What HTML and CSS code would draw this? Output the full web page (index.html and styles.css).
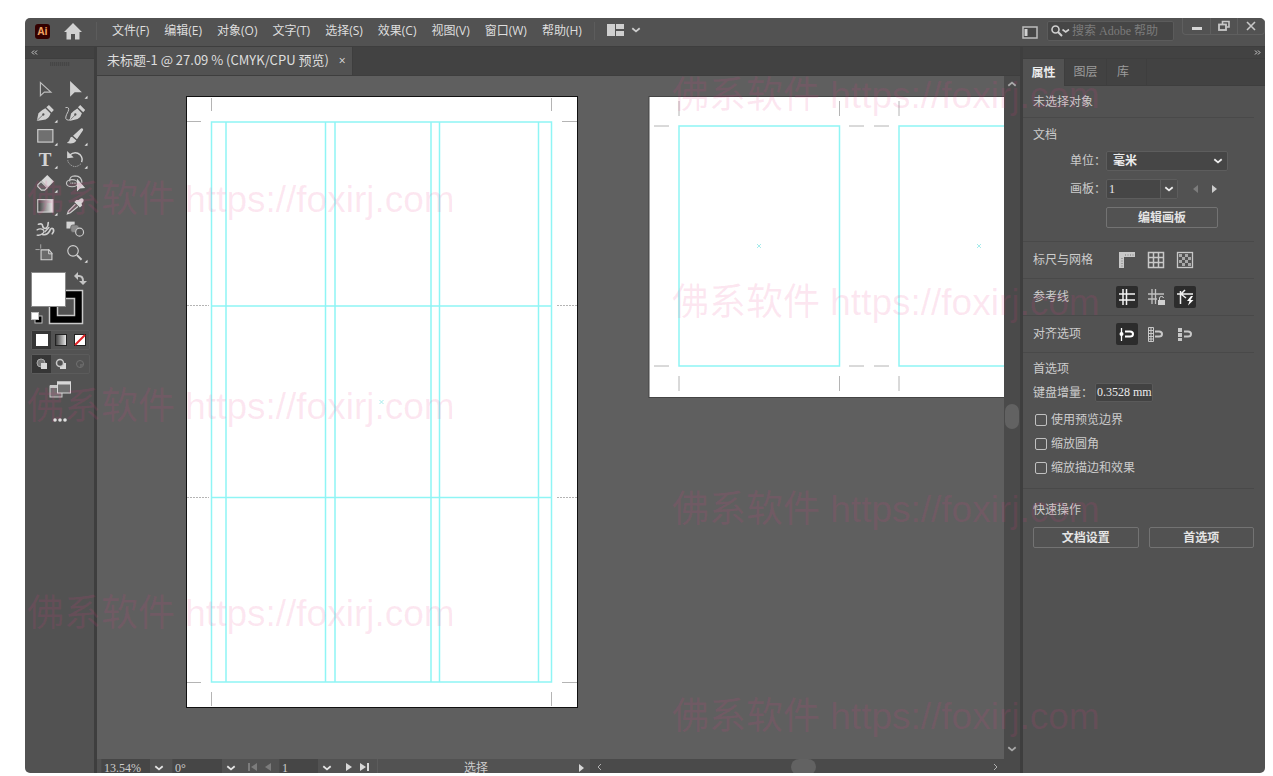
FILE: index.html
```html
<!DOCTYPE html>
<html lang="zh-CN">
<head>
<meta charset="utf-8">
<title>未标题-1 @ 27.09 % (CMYK/CPU 预览)</title>
<link rel="stylesheet" href="styles.css">
</head>
<body>
<svg class="defs" aria-hidden="true">
  <symbol id="chev" viewBox="0 0 10 6"><path d="M1.3 1.2L5 4.4L8.7 1.2" fill="none" stroke="currentColor" stroke-width="1.8"/></symbol>
  <symbol id="corner" viewBox="0 0 84 70"><path d="M80 54V63H71Z" fill="#e4e4e4"/></symbol>
  <linearGradient id="fade"><stop offset="0" stop-color="#3a3a3a"/><stop offset="1" stop-color="#f0f0f0"/></linearGradient>
</svg>
<div class="app">
  <header class="topbar">
    <span class="logo">Ai</span>
    <button class="home" aria-label="主页"><svg width="18" height="17" viewBox="0 0 18 17"><path d="M9 0L18 9H15.500V16.500H11V11H7V16.500H2.500V9H0Z" fill="#d2d2d2"/></svg></button>
    <nav class="menu">
      <button>文件(F)</button><button>编辑(E)</button><button>对象(O)</button><button>文字(T)</button><button>选择(S)</button><button>效果(C)</button><button>视图(V)</button><button>窗口(W)</button><button>帮助(H)</button>
    </nav>
    <button class="layout-btn" aria-label="排列文档">
      <svg width="17" height="12" viewBox="0 0 17 12"><path d="M0 0H8V12H0ZM9 0H17V5H9ZM9 7H17V12H9Z" fill="#cfcfcf"/></svg>
      <svg width="10" height="6"><use href="#chev"/></svg>
    </button>
    <div class="top-right">
      <button class="workspace" aria-label="切换工作区"><svg width="16" height="13" viewBox="0 0 16 13"><rect x="1" y="1" width="14" height="11" fill="#474747" stroke="#bdbdbd" stroke-width="1.500"/><rect x="2.500" y="3" width="3" height="7" fill="#d2d2d2"/></svg></button>
      <label class="search">
        <svg width="19" height="12" viewBox="0 0 19 12"><circle cx="4.500" cy="4.500" r="3.500" fill="none" stroke="#d0d0d0" stroke-width="1.600"/><path d="M7 7L11 11" stroke="#d0d0d0" stroke-width="2"/><path d="M11.500 4.500L14.700 7L18 4.500" fill="none" stroke="#d0d0d0" stroke-width="1.600"/></svg>
        <input type="text" placeholder="搜索 Adobe 帮助" aria-label="搜索 Adobe 帮助">
      </label>
      <div class="win-controls">
        <button aria-label="最小化"><svg width="12" height="12" viewBox="0 0 12 12"><path d="M1 8.500H11" stroke="#d5d5d5" stroke-width="3"/></svg></button>
        <button aria-label="还原"><svg width="12" height="12" viewBox="0 0 12 12"><path d="M4.500 4V1.500H11V7H8.500" fill="none" stroke="#c8c8c8" stroke-width="1.600"/><rect x="1" y="4.500" width="7" height="5.500" fill="none" stroke="#c8c8c8" stroke-width="1.800"/></svg></button>
        <button aria-label="关闭"><svg width="12" height="12" viewBox="0 0 12 12"><path d="M2 2L10 10M10 2L2 10" stroke="#c8c8c8" stroke-width="1.600"/></svg></button>
      </div>
    </div>
  </header>

  <main class="main">
    <aside class="tools">
      <button class="collapse left" aria-label="折叠工具栏"><svg width="7" height="5" viewBox="0 0 7 5"><path d="M3 .500L1 2.500L3 4.500M6 .500L4 2.500L6 4.500" fill="none" stroke="#cfcfcf"/></svg></button>
      <div class="grip"></div>
      <div class="tool-grid">
        <button aria-label="选择工具"><svg viewBox="0 0 84 70"><path d="M28 14V54L40 43H60Z" fill="none" stroke="#bdbdbd" stroke-width="3.500"/></svg></button>
        <button aria-label="直接选择工具"><svg viewBox="0 0 84 70"><path d="M27 9V57L41 43H63Z" fill="#d0d0d0"/><use href="#corner"/></svg></button>
        <button aria-label="钢笔工具"><svg viewBox="0 0 84 70"><path d="M17 58L22 34Q32 24 43 19L59 35Q56 47 44 53Z M46 16L54 9L69 24L62 32Z" fill="#d0d0d0"/><path d="M18 56L36 39" stroke="#525252" stroke-width="2"/><circle cx="37" cy="38" r="3.500" fill="#525252"/><use href="#corner"/></svg></button>
        <button aria-label="曲率工具"><svg viewBox="0 0 84 70"><path d="M25 58L30 35Q39 26 49 20L63 34Q60 46 50 52Z M51 16L58 9L73 24L67 31Z" fill="#d0d0d0"/><path d="M26 56L42 40" stroke="#525252" stroke-width="2"/><circle cx="43" cy="38" r="3.500" fill="#525252"/><path d="M13 17Q27 14 21 29Q9 50 17 54Q22 57 29 53" fill="none" stroke="#c6c6c6" stroke-width="3"/></svg></button>
        <button aria-label="矩形工具"><svg viewBox="0 0 84 70"><rect x="20" y="14" width="46" height="38" fill="#707070" stroke="#cfcfcf" stroke-width="3.500"/><use href="#corner"/></svg></button>
        <button aria-label="画笔工具"><svg viewBox="0 0 84 70"><path d="M61 10Q69 10 66 17L48 43L36 33Z M33 36L46 47Q40 59 17 55Q26 50 26 43Q28 36 33 36Z" fill="#d0d0d0"/><use href="#corner"/></svg></button>
        <button aria-label="文字工具"><svg viewBox="0 0 84 70"><text class="type-glyph" x="42" y="54" text-anchor="middle">T</text><use href="#corner"/></svg></button>
        <button aria-label="旋转工具"><svg viewBox="0 0 84 70"><path d="M25 22Q43 7 58 21Q67 32 62 43" fill="none" stroke="#d0d0d0" stroke-width="4.500"/><path d="M18 9L38 29L18 31Z" fill="#d0d0d0"/><path d="M60 48Q42 65 25 48Q20 43 20 36" fill="none" stroke="#bdbdbd" stroke-width="3" stroke-dasharray="3 3"/><use href="#corner"/></svg></button>
        <button aria-label="橡皮擦工具"><svg viewBox="0 0 84 70"><path d="M49 9L69 29L51 47L31 27Z" fill="#d8d8d8"/><path d="M30 29L49 48L41 55H31L20 44V39Z" fill="#616161" stroke="#cfcfcf" stroke-width="3.500"/><use href="#corner"/></svg></button>
        <button aria-label="形状生成器工具"><svg viewBox="0 0 84 70"><g fill="none" stroke="#c4c4c4" stroke-width="3.500"><ellipse cx="33" cy="34" rx="17" ry="11"/><path d="M26 29Q24 12 42 12Q63 13 63 33"/><path d="M28 34H49" stroke-dasharray="3 2"/></g><path d="M48 20V59L57 50L73 49Z" fill="#d8d8d8"/></svg></button>
        <button aria-label="渐变工具"><svg viewBox="0 0 84 70"><rect x="20" y="14" width="46" height="38" fill="url(#fade)" stroke="#d0d0d0" stroke-width="3.500"/><use href="#corner"/></svg></button>
        <button aria-label="吸管工具"><svg viewBox="0 0 84 70"><path d="M53 15Q62 6 67 12Q71 18 62 26L64 32L57 38L40 21L46 15Z" fill="#d8d8d8"/><path d="M43 28L22 49L19 57L28 54L51 35" fill="#626262" stroke="#cfcfcf" stroke-width="3.500"/></svg></button>
        <button aria-label="操控变形工具"><svg viewBox="0 0 84 70"><g fill="none" stroke="#d0d0d0" stroke-linecap="round"><path d="M22 19Q34 15 35 25Q36 33 46 31Q52 26 52 14" stroke-width="5"/><path d="M18 36Q28 30 37 36Q42 42 34 48Q26 54 18 52" stroke-width="4"/><path d="M34 50Q48 54 56 40Q60 28 67 33Q71 40 64 48" stroke-width="5"/><path d="M42 42L54 29" stroke-width="4"/></g></svg></button>
        <button aria-label="混合工具"><svg viewBox="0 0 84 70"><rect x="16" y="11" width="25" height="21" fill="#d4d4d4"/><rect x="29" y="21" width="25" height="23" rx="7" fill="#8b8b8b" stroke="#525252" stroke-width="2"/><circle cx="56" cy="43" r="12" fill="#525252" stroke="#cccccc" stroke-width="3.500"/></svg></button>
        <button aria-label="画板工具"><svg viewBox="0 0 84 70"><path d="M30 24H54L63 34V54H30Z" fill="#6b6b6b" stroke="#d0d0d0" stroke-width="3.500"/><path d="M53 22V36H65" fill="none" stroke="#d0d0d0" stroke-width="3"/><path d="M29 7V20M13 23H26" stroke="#a8a8a8" stroke-width="3"/></svg></button>
        <button aria-label="缩放工具"><svg viewBox="0 0 84 70"><circle cx="36" cy="27" r="16" fill="none" stroke="#cfcfcf" stroke-width="3.500"/><path d="M48 40L62 54" stroke="#d0d0d0" stroke-width="6"/><use href="#corner"/></svg></button>
      </div>
      <button class="fill-stroke" aria-label="填色和描边">
        <svg width="60" height="60" viewBox="0 0 60 60">
          <path d="M19.500 22.500H52.500V55.500H19.500Z" fill="#000" stroke="#c8c8c8" stroke-width="1.500"/>
          <rect x="27.500" y="30.500" width="17" height="17" fill="#525252" stroke="#c8c8c8" stroke-width="1.500"/>
          <rect x="1.500" y="4.500" width="34" height="34" fill="#fff" stroke="#8a8a8a"/>
          <path d="M47 8H49Q53 8 53 13V14" fill="none" stroke="#c4c4c4" stroke-width="2"/><path d="M48 4V12L44 8ZM49 13H57L53 17Z" fill="#c4c4c4"/>
          <rect x="5" y="48" width="7" height="7" fill="#000" stroke="#bdbdbd"/><rect x="1.500" y="44.500" width="7" height="7" fill="#fff" stroke="#bdbdbd"/>
        </svg>
      </button>
      <div class="swatches">
        <button class="on" aria-label="颜色"><svg width="12" height="12"><rect width="12" height="12" fill="#fff"/></svg></button>
        <button aria-label="渐变"><svg width="12" height="12"><rect x=".5" y=".5" width="11" height="11" fill="url(#fade)" stroke="#222"/></svg></button>
        <button aria-label="无"><svg width="12" height="12"><rect x=".5" y=".5" width="11" height="11" fill="#fff" stroke="#222"/><path d="M1 11L11 1" stroke="#e02226" stroke-width="2"/></svg></button>
      </div>
      <div class="swatches modes">
        <button class="on" aria-label="正常绘图"><svg width="12" height="12"><circle cx="5" cy="5" r="4" fill="#777" stroke="#aaa"/><path d="M5 5H11V11H5Z" fill="#d8d8d8"/></svg></button>
        <button aria-label="背面绘图"><svg width="12" height="12"><path d="M5 5H11V11H5Z" fill="#d8d8d8"/><circle cx="5" cy="5" r="3.500" fill="#525252" stroke="#c8c8c8" stroke-width="1.500"/></svg></button>
        <button aria-label="内部绘图"><svg width="12" height="12"><circle cx="6" cy="6" r="3.500" fill="none" stroke="#707070"/><path d="M6 6H9V9H6Z" fill="#656565"/></svg></button>
      </div>
      <button class="screen-mode" aria-label="更改屏幕模式"><svg width="22" height="17" viewBox="0 0 22 17"><rect x="1" y="5" width="12" height="11" fill="#707070" stroke="#c8c8c8"/><path d="M1 5.500H13" stroke="#c8c8c8" stroke-width="3"/><rect x="8.500" y="1" width="13" height="11" fill="#707070" stroke="#d8d8d8"/><path d="M8 2H22" stroke="#d8d8d8" stroke-width="3"/></svg></button>
      <button class="more" aria-label="编辑工具栏"><svg width="14" height="4"><circle cx="2" cy="2" r="1.800" fill="#e0e0e0"/><circle cx="7" cy="2" r="1.800" fill="#e0e0e0"/><circle cx="12" cy="2" r="1.800" fill="#e0e0e0"/></svg></button>
    </aside>

    <section class="document">
      <div class="doc-tabs">
        <div class="doc-tab"><span>未标题-1 @ 27.09 % (CMYK/CPU 预览)</span><button aria-label="关闭文档">×</button></div>
      </div>
      <div class="view">
        <svg class="canvas" role="img" aria-label="画板">
          <g transform="translate(-97 -76)">
            <rect x="186.500" y="96.500" width="391" height="611" fill="#fff" stroke="#111"/>
            <path class="crop" d="M211.500 98V111M551.500 98V111M211.500 692V706M551.500 692V706M187 121.500H201M562 121.500H577M187 682.500H201M562 682.500H577"/>
            <path class="crop dash" d="M187 305.500H209M557 305.500H577M187 497.500H209M557 497.500H577"/>
            <path class="guide" d="M211.500 122H551.500V682H211.500ZM226 122V682M325.500 122V682M335 122V682M431 122V682M439.500 122V682M538.500 122V682M211 306H552M211 497.500H552"/>
            <path class="center" d="M379.500 400L383.500 404M383.500 400L379.500 404"/>
            <rect x="649" y="96.500" width="500" height="301" fill="#fff" stroke="#444"/>
            <path class="crop" d="M679 101V116M839.500 101V116M899 101V116M679 376V391M839.500 376V391M899 376V391M654 126H669M849 126H864M874 126H889M654 366H669M849 366H864M874 366H889"/>
            <path class="guide" d="M679 126H839.500V366H679ZM899 126H1059V366H899Z"/>
            <path class="center" d="M757 244L761 248M761 244L757 248M977 244L981 248M981 244L977 248"/>
          </g>
        </svg>
        <div class="vscroll">
          <svg width="10" height="6" class="up"><use href="#chev"/></svg>
          <span class="thumb"></span>
          <svg width="10" height="6"><use href="#chev"/></svg>
        </div>
      </div>
      <footer class="status">
        <label class="field zoom"><input type="text" value="13.54%" aria-label="缩放"><svg width="10" height="6"><use href="#chev"/></svg></label>
        <label class="field angle"><input type="text" value="0°" aria-label="旋转视图"><svg width="10" height="6"><use href="#chev"/></svg></label>
        <div class="nav dim">
          <button aria-label="首项"><svg width="9" height="8"><path d="M1 0V8" stroke="currentColor" stroke-width="2"/><path d="M9 0V8L3 4Z" fill="currentColor"/></svg></button>
          <button aria-label="上一项"><svg width="6" height="8"><path d="M6 0V8L0 4Z" fill="currentColor"/></svg></button>
        </div>
        <label class="field page"><input type="text" value="1" aria-label="画板导航"><svg width="10" height="6"><use href="#chev"/></svg></label>
        <div class="nav">
          <button aria-label="下一项"><svg width="6" height="8"><path d="M0 0V8L6 4Z" fill="currentColor"/></svg></button>
          <button aria-label="末项"><svg width="9" height="8"><path d="M8 0V8" stroke="currentColor" stroke-width="2"/><path d="M0 0V8L6 4Z" fill="currentColor"/></svg></button>
        </div>
        <div class="state"><span>选择</span><svg width="5" height="8"><path d="M0 0V8L5 4Z" fill="#d8d8d8"/></svg></div>
        <div class="hscroll"><svg width="5" height="8"><path d="M4 1L1 4L4 7" fill="none" stroke="#b0b0b0"/></svg><span class="thumb"></span><svg width="5" height="8"><path d="M1 1L4 4L1 7" fill="none" stroke="#b0b0b0"/></svg></div>
      </footer>
    </section>

    <aside class="panel">
      <button class="collapse right" aria-label="折叠面板"><svg width="7" height="5" viewBox="0 0 7 5"><path d="M1 .500L3 2.500L1 4.500M4 .500L6 2.500L4 4.500" fill="none" stroke="#cfcfcf"/></svg></button>
      <div class="tabs"><button class="on">属性</button><button>图层</button><button>库</button></div>
      <div class="props">
        <section class="row-sec head">未选择对象</section>
        <section class="doc-sec">
          <h2>文档</h2>
          <div class="form-row"><label for="unit">单位：</label><span class="select"><select id="unit"><option>毫米</option></select><svg width="10" height="6"><use href="#chev"/></svg></span></div>
          <div class="form-row"><label for="board">画板：</label><span class="select small"><input id="board" type="text" value="1"><span class="drop"><svg width="10" height="6"><use href="#chev"/></svg></span></span>
            <button class="step dim" aria-label="上一个画板"><svg width="5" height="8"><path d="M5 0V8L0 4Z" fill="currentColor"/></svg></button><button class="step" aria-label="下一个画板"><svg width="5" height="8"><path d="M0 0V8L5 4Z" fill="currentColor"/></svg></button></div>
          <button class="btn edit">编辑画板</button>
        </section>
        <section class="row-sec"><h2>标尺与网格</h2>
          <button class="ico" aria-label="标尺"><svg width="18" height="18"><path d="M1 1H17V6H6V17H1Z" fill="#c8c8c8"/><path d="M7 4H16M4 7V16" stroke="#777" stroke-dasharray="1 1.500" fill="none"/></svg></button>
          <button class="ico" aria-label="网格"><svg width="18" height="18"><path d="M1.500 1.500H16.500V16.500H1.500ZM6.500 1V17M11.500 1V17M1 6.500H17M1 11.500H17" fill="none" stroke="#c8c8c8" stroke-width="1.500"/></svg></button>
          <button class="ico" aria-label="透明度网格"><svg width="18" height="18"><rect x="1.500" y="1.500" width="15" height="15" fill="#525252" stroke="#c8c8c8" stroke-width="1.300"/><path d="M3 4.500H15M3 10.500H15" stroke="#a8a8a8" stroke-width="3" stroke-dasharray="3 3"/><path d="M6 7.500H15M6 13.500H15" stroke="#a8a8a8" stroke-width="3" stroke-dasharray="3 3"/></svg></button>
        </section>
        <section class="row-sec"><h2>参考线</h2>
          <button class="ico on" aria-label="显示参考线"><svg width="18" height="18"><path d="M5 1V17M8.500 1V17M1 6H17M1 12H17" stroke="#f4f4f4" stroke-width="1.500"/></svg></button>
          <button class="ico" aria-label="锁定参考线"><svg width="18" height="18"><path d="M5 1V16M8.500 1V16M1 6H17M1 11H10" stroke="#c0c0c0" stroke-width="1.300"/><rect x="11" y="12" width="7" height="5" fill="#d0d0d0"/><path d="M12.500 12V10Q12.500 8.500 14.500 8.500Q16.500 8.500 16.500 10" fill="none" stroke="#d0d0d0"/></svg></button>
          <button class="ico on" aria-label="智能参考线"><svg width="18" height="18"><path d="M4.500 3V16M1 6H17M9 2L5 6L10 10" fill="none" stroke="#f0f0f0" stroke-width="1.500"/><path d="M15 8L11 13H13.500L12 17.500L17.500 12H14.500L17 8Z" fill="#fff"/></svg></button>
        </section>
        <section class="row-sec"><h2>对齐选项</h2>
          <button class="ico on" aria-label="对齐点"><svg width="18" height="18"><path d="M3.500 3V16" stroke="#fff" stroke-width="1.300"/><circle cx="3.500" cy="9" r="2" fill="#fff"/><path d="M7 6.500H12Q15 6.500 15 9Q15 11.500 12 11.500H7" fill="none" stroke="#fff" stroke-width="2"/></svg></button>
          <button class="ico" aria-label="对齐网格"><svg width="18" height="18"><path d="M1.500 2.500H6.500V16.500H1.500ZM4 2V17M1 5.500H7M1 8.500H7M1 11.500H7M1 14H7" fill="none" stroke="#c8c8c8"/><path d="M8 6.500H12Q15 6.500 15 9Q15 11.500 12 11.500H8" fill="none" stroke="#c8c8c8" stroke-width="2"/></svg></button>
          <button class="ico" aria-label="对齐像素"><svg width="18" height="18"><path d="M2 3H6V7H2ZM2 8H6V12H2ZM2 13H6V16H2Z" fill="#c8c8c8"/><path d="M8 6.500H12Q15 6.500 15 9Q15 11.500 12 11.500H8" fill="none" stroke="#c8c8c8" stroke-width="2"/></svg></button>
        </section>
        <section class="pref-sec">
          <h2>首选项</h2>
          <div class="inc"><label for="inc">键盘增量：</label><input id="inc" type="text" value="0.3528 mm"></div>
          <label class="check"><input type="checkbox">使用预览边界</label>
          <label class="check"><input type="checkbox">缩放圆角</label>
          <label class="check"><input type="checkbox">缩放描边和效果</label>
        </section>
        <section class="quick">
          <h2>快速操作</h2>
          <div class="quick-btns"><button class="btn">文档设置</button><button class="btn">首选项</button></div>
        </section>
      </div>
    </aside>
  </main>

  <div class="watermarks" aria-hidden="true">
    <div class="wm-col first"><span>佛系软件 https://foxirj.com</span><span>佛系软件 https://foxirj.com</span><span>佛系软件 https://foxirj.com</span></div>
    <div class="wm-col second"><span>佛系软件 https://foxirj.com</span><span>佛系软件 https://foxirj.com</span><span>佛系软件 https://foxirj.com</span><span>佛系软件 https://foxirj.com</span></div>
  </div>
</div>
</body>
</html>
```
FILE: styles.css
```css
:root {
  --panel: #525252;
  --dark: #424242;
  --line: #3e3e3e;
  --field: #464646;
  --text: #cccccc;
  --ui: "Open Sans", "Noto Sans CJK SC", sans-serif;
  --form: "Liberation Serif", "Noto Sans CJK SC", serif;
}
* { box-sizing: border-box; }
body {
  margin: 0;
  height: 100vh;
  padding: 18px 8px 3px 25px;
  background: #fff;
  overflow: hidden;
}
.defs { position: absolute; width: 0; height: 0; }
svg { display: block; }
button, input, select {
  margin: 0;
  padding: 0;
  border: 0;
  background: none;
  color: inherit;
  font: inherit;
  appearance: none;
  border-radius: 0;
}
h2 { margin: 0; font: inherit; }
.app {
  position: relative;
  height: 100%;
  display: flex;
  flex-direction: column;
  border-radius: 5px;
  overflow: hidden;
  background: var(--panel);
  color: var(--text);
  font: 12px/16px var(--ui);
}

/* Top bar */
.topbar {
  flex: none;
  height: 29px;
  display: flex;
  align-items: center;
  border-bottom: 1px solid var(--line);
  padding-left: 10px;
}
.logo {
  width: 15px;
  height: 15px;
  border-radius: 3px;
  background: #330000;
  color: #f0a060;
  font: bold 10px/15px var(--ui);
  text-align: center;
  margin-top: -2px;
}
.home { margin-left: 14px; margin-top: -1px; }
.menu {
  display: flex;
  gap: 15px;
  margin-left: 14px;
  padding-left: 15px;
  padding-right: 12px;
  border-left: 1px solid #5c5c5c;
  border-right: 1px solid #5c5c5c;
  height: 18px;
  align-items: center;
  margin-top: -3px;
  white-space: nowrap;
  color: #dedede;
}
.layout-btn { display: flex; align-items: center; gap: 7px; margin: -4px 0 0 12px; }
.top-right {
  margin-left: auto;
  align-self: stretch;
  display: flex;
  align-items: flex-start;
  padding-left: 13px;
}
.workspace { margin-top: 8px; }
.search {
  display: flex;
  align-items: center;
  width: 127px;
  height: 20px;
  margin: 3px 8px 0 9px;
  padding-left: 3px;
  gap: 2px;
  border: 1px solid #5b5b5b;
  border-radius: 2px;
  background: var(--field);
  font-family: var(--form);
}
.search input { flex: 1; min-width: 0; }
.search input::placeholder { color: #7b7b7b; opacity: 1; }
.win-controls {
  display: flex;
  height: 17px;
  border: 1px solid #5f5f5f;
  border-top: 0;
  border-radius: 0 0 4px 4px;
}
.win-controls button { width: 27px; display: grid; place-items: center; }
.win-controls button + button { border-left: 1px solid #5f5f5f; }

.main { flex: 1; min-height: 0; display: flex; }

/* Tools */
.tools {
  flex: none;
  width: 72px;
  border-right: 3px solid var(--line);
  display: flex;
  flex-direction: column;
  align-items: flex-start;
}
.collapse {
  flex: none;
  width: 100%;
  height: 12px;
  background: var(--dark);
  border-bottom: 1px solid var(--line);
  display: flex;
  align-items: center;
  padding: 0 6px;
}
.collapse.right { justify-content: flex-end; padding-right: 4px; }
.grip {
  width: 20px;
  height: 4px;
  margin: 3px 0 0 25px;
  background: repeating-linear-gradient(90deg, #464646 0 1px, #4e4e4e 1px 2px);
}
.tool-grid {
  display: grid;
  grid-template-columns: 28px 28px;
  grid-template-rows: repeat(8, 1fr);
  column-gap: 2px;
  height: 187px;
  margin: 12px 0 0 6px;
}
.tool-grid svg { width: 28px; height: 23px; }
.type-glyph { font: bold 58px "Liberation Serif", serif; fill: #d4d4d4; }
.fill-stroke { margin: 3px 0 0 5px; }
.swatches {
  display: flex;
  margin: 2px 0 0 6px;
  border: 1px solid #5b5b5b;
  border-radius: 2px;
}
.swatches button { width: 19px; height: 18px; display: grid; place-items: center; }
.swatches .on { background: #363636; }
.modes { margin-top: 4px; }
.screen-mode { margin: 7px 0 0 24px; }
.more { margin: 20px 0 0 28px; }

/* Document */
.document { flex: 1; min-width: 0; display: flex; flex-direction: column; }
.doc-tabs { flex: none; height: 29px; background: var(--dark); border-bottom: 1px solid var(--line); display: flex; }
.doc-tab {
  display: flex;
  align-items: center;
  gap: 10px;
  padding: 0 6px 0 10px;
  background: var(--panel);
  border-right: 1px solid var(--line);
  color: #dedede;
  font: 13px/16px "Noto Sans CJK SC", sans-serif;
  white-space: nowrap;
}
.doc-tab span { padding-bottom: 2px; }
.doc-tab button { font: 12px/16px var(--ui); }
.view { flex: 1; min-height: 0; display: flex; background: #5f5f5f; }
.canvas { flex: 1; min-width: 0; height: 100%; }
.crop { fill: none; stroke: #b4b4b4; }
.dash { stroke-dasharray: 2 1; }
.guide { fill: none; stroke: #8ff5f5; stroke-width: 1.5; }
.center { fill: none; stroke: #a8ecec; }
.vscroll {
  flex: none;
  width: 16px;
  display: flex;
  flex-direction: column;
  align-items: center;
  justify-content: space-between;
  padding: 5px 0 7px;
  background: #4a4a4a;
  color: #a8a8a8;
}
.thumb { background: #626262; border-radius: 8px; }
.vscroll .thumb { width: 14px; height: 25px; }
.up { transform: rotate(180deg); }

.status {
  flex: none;
  height: 14px;
  display: flex;
  padding-left: 4px;
  overflow: hidden;
  font-family: var(--form);
}
.field { display: flex; height: 18px; align-items: center; }
.field input {
  flex: 1;
  min-width: 0;
  height: 18px;
  padding-left: 2px;
  background: var(--field);
  border-left: 1px solid #4a4a4a;
}
.field svg { margin: 0 4px; color: #e4e4e4; }
.zoom { width: 67px; }
.angle { width: 68px; margin-left: 4px; }
.page { width: 57px; }
.nav { display: flex; gap: 8px; height: 16px; align-items: center; padding: 0 8px; color: #d8d8d8; }
.page + .nav { padding: 0 8px 0 10px; }
.dim { color: #7c7c7c; }
.state {
  flex: none;
  width: 213px;
  display: flex;
  align-items: center;
  height: 17px;
  padding-left: 86px;
  padding-right: 6px;
  border-left: 1px solid #5c5c5c;
  justify-content: space-between;
}
.hscroll {
  flex: 1;
  display: flex;
  align-items: center;
  justify-content: space-between;
  height: 16px;
  padding: 0 22px 0 7px;
  background: #4a4a4a;
}
.hscroll .thumb { width: 25px; height: 16px; margin-left: 12px; }

/* Properties panel */
.panel { flex: none; width: 245px; border-left: 3px solid var(--line); }
.tabs { display: flex; height: 27px; background: var(--dark); border-bottom: 1px solid var(--line); }
.tabs button { width: 42px; border-right: 1px solid var(--line); color: #9c9c9c; }
.tabs button.on { background: var(--panel); color: #ececec; height: 27px; font-weight: bold; }
.tabs button:last-child { padding-right: 7px; width: 40px; }
.props { padding-right: 11px; font-family: var(--form); }
.props > section { padding-left: 10px; border-bottom: 1px solid #494949; }
.props > section:last-child { border: 0; }
.row-sec { height: 37px; display: flex; align-items: center; gap: 7px; }
.row-sec h2 { width: 76px; }
.row-sec.head { height: 32px; }
.doc-sec { padding-top: 9px; height: 124px; }
.form-row { display: flex; align-items: center; height: 20px; }
.doc-sec h2 { margin-bottom: 8px; }
.form-row + .form-row { margin-top: 8px; }
.form-row label { width: 73px; text-align: right; }
.select {
  width: 122px;
  height: 20px;
  display: flex;
  align-items: center;
  border: 1px solid #5d5d5d;
  border-radius: 2px;
  background: var(--field);
  color: #ececec;
}
.select select { flex: 1; padding-left: 6px; font-weight: bold; }
.select > svg { margin-right: 4px; }
.select.small { width: 72px; margin-right: 8px; }
.select input { flex: 1; min-width: 0; padding-left: 2px; height: 18px; }
.drop { width: 17px; height: 18px; border-left: 1px solid #5d5d5d; display: grid; place-items: center; background: #4d4d4d; }
.step { width: 19px; display: grid; place-items: center; }
.btn {
  height: 21px;
  border: 1px solid #737373;
  border-radius: 2px;
  color: #e4e4e4;
  font-weight: bold;
}
.edit { width: 112px; margin: 8px 0 0 73px; display: block; }
.ico { width: 22px; height: 22px; border-radius: 2px; display: grid; place-items: center; }
.ico.on { background: #2c2c2c; }
.pref-sec { padding-top: 8px; height: 136px; }
.inc { display: flex; align-items: center; margin: 6px 0 10px; }
.inc label { width: 62px; white-space: nowrap; }
.inc input {
  width: 58px;
  height: 19px;
  padding-left: 1px;
  border: 1px solid #5a5a5a;
  border-radius: 2px;
  background: #424242;
  color: #ececec;
}
.check { display: flex; align-items: center; gap: 4px; height: 16px; margin: 0 0 8px 2px; }
.check input { width: 12px; height: 12px; border: 1px solid #c0c0c0; border-radius: 2px; }
.quick { padding-top: 13px; }
.quick-btns { display: flex; gap: 10px; margin-top: 9px; }
.quick-btns .btn { flex: 1; }

/* Watermark overlay */
.watermarks { position: absolute; inset: 0; overflow: hidden; pointer-events: none; }
.wm-col {
  position: absolute;
  display: flex;
  flex-direction: column;
  gap: 163px;
  color: rgba(236, 56, 136, 0.12);
  font: 37px/44px "Liberation Sans", "Noto Sans CJK SC", sans-serif;
  white-space: nowrap;
}
.first { left: 2px; top: 160px; }
.second { left: 647px; top: 56px; }
```
